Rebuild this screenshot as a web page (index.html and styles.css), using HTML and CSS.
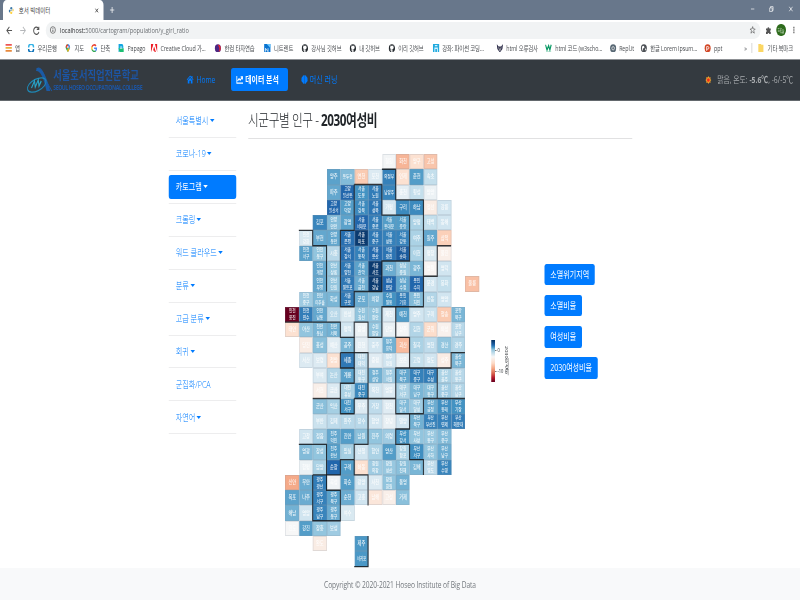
FILE: index.html
```html
<!DOCTYPE html>
<html lang="ko">
<head>
<meta charset="utf-8">
<title>호서 빅데이터</title>
<link rel="stylesheet" href="styles.css">
</head>
<body>
<div class="page">
  <div class="tabbar">
    <div class="tab">
      <svg class="ico" viewBox="0 0 10 10"><path d="M5 0C3 0 3 1 3 3h3v1H1C0 4 0 8 2 8h1V5h4V1Q7 0 5 0" fill="#3b78a8"/><path d="M5 10c2 0 2-1 2-3H4V6h5c1 0 1-4-1-4v3L3 6v3q0 1 2 1" fill="#ffd343"/></svg>
      <span class="tab-title">호서 빅데이터</span>
      <svg class="close" viewBox="0 0 8 8"><path d="M1 1l6 6M7 1l-6 6" stroke="#333" stroke-width="1.3"/></svg>
    </div>
    <svg class="plus" viewBox="0 0 8 8"><path d="M4 0v8M0 4h8" stroke="#fff" stroke-width="1.1"/></svg>
    <div class="win">
      <svg viewBox="0 0 8 8"><path d="M1 4h6" stroke="#fff"/></svg>
      <svg viewBox="0 0 8 8"><path d="M1 2.5h4.500v5H1zM2.500 2.500V.8H7V6H5.500" fill="none" stroke="#fff"/></svg>
      <svg viewBox="0 0 8 8"><path d="M1 1l6 6M7 1l-6 6" stroke="#fff"/></svg>
    </div>
  </div>
  <div class="toolbar">
    <svg viewBox="0 0 10 10"><path d="M9 5H1.500M5 1L1.300 5 5 9" fill="none" stroke="#555" stroke-width="1.300"/></svg>
    <svg viewBox="0 0 10 10"><path d="M1 5h7.500M5 1l3.700 4L5 9" fill="none" stroke="#b5b7ba" stroke-width="1.200"/></svg>
    <svg viewBox="0 0 10 10"><path d="M8.300 3A4 4 0 1 0 8.800 6.500M8.800 .8V3.800H5.600" fill="none" stroke="#555" stroke-width="1.400"/></svg>
    <div class="url">
      <svg viewBox="0 0 10 10"><circle cx="5" cy="5" r="4.200" fill="none" stroke="#555"/><path d="M5 4.500V7.500M5 2.300v1.200" stroke="#555" stroke-width="1.200"/></svg>
      <span><b>localhost:</b>5000/cartogram/population/y_girl_ratio</span>
      <svg class="star" viewBox="0 0 10 10"><path d="M5 .8l1.200 3H9.300L6.900 5.800l.9 3.200L5 7.200 2.200 9l.9-3.200L.7 3.800h3.100z" fill="none" stroke="#555" stroke-width=".9"/></svg>
    </div>
    <svg class="puzzle" viewBox="0 0 10 10"><path d="M1 3h2.500a1.500 1.500 0 1 1 3 0H9v2.300a1 1 0 0 0 0 2.200V10H6.500a1.300 1.300 0 0 0-2.600 0H1V7.500a1.200 1.200 0 0 0 0-2.400z" fill="#555"/></svg>
    <div class="avatar">하늘</div>
    <svg class="dots" viewBox="0 0 4 10"><path d="M1 1h2v2H1zM1 4h2v2H1zM1 7h2v2H1z" fill="#666"/></svg>
  </div>
  <div class="bookmarks">
    <div class="bm"><svg viewBox="0 0 10 10"><path d="M0 1h10" stroke="#e55" stroke-width="2"/><path d="M0 4.500h10" stroke="#e9b23c" stroke-width="2"/><path d="M0 8h10" stroke="#e8893c" stroke-width="2"/></svg>앱</div>
    <div class="bm"><svg viewBox="0 0 10 10"><path d="M1 4a4 4 0 0 1 8 0" fill="none" stroke="#36b3e6" stroke-width="2.400"/><path d="M1 6a4 4 0 0 0 8 0" fill="none" stroke="#0a70b8" stroke-width="2.400"/></svg>우리은행</div>
    <div class="bm"><svg viewBox="0 0 10 10"><path d="M5 10L2 5.500A3.700 3.700 0 0 1 5 0z" fill="#34a853"/><path d="M5 10l3-4.500A3.700 3.700 0 0 0 5 0z" fill="#4285f4"/><path d="M2 5A4 4 0 0 1 4 0l2 3z" fill="#ea4335"/><path d="M4 7l4-4-1 4-2 3z" fill="#fbbc04"/><circle cx="5" cy="3.500" r="1.200" fill="#fff"/></svg>지도</div>
    <div class="bm"><svg viewBox="0 0 10 10"><g fill="none" stroke-width="1.800"><path d="M8 2.200A4 4 0 0 0 1.500 3.500" stroke="#ea4335"/><path d="M1.500 3.300v3.400" stroke="#fbbc05"/><path d="M1.600 6.500A4 4 0 0 0 7.500 8" stroke="#34a853"/><path d="M7.300 8A4 4 0 0 0 8.800 5H5" stroke="#4285f4"/></g></svg>단축</div>
    <div class="bm"><svg viewBox="0 0 10 10"><path d="M1 0h6a3 4 0 0 1 0 7H5l-4 3z" fill="#13a7e0"/><path d="M1 5h8v5H3z" fill="#1dbf73"/><path d="M3 5h4M3.500 3.500h3" stroke="#fff"/></svg>Papago</div>
    <div class="bm"><svg viewBox="0 0 10 10"><path d="M0 0h10v10H0z" fill="#ed1c24"/><path d="M3.700 0h2.600L10 10H8L5 3 3.300 7.500H5L6 10H0z" fill="#fff"/><path d="M0 0h3.500L0 8z" fill="#ed1c24"/></svg>Creative Cloud 가...</div>
    <div class="bm"><svg viewBox="0 0 10 10"><circle cx="5" cy="5" r="4.800" fill="#4c2683"/><path d="M5 1a4 4 0 0 1 1 8Q9 6 5 1" fill="#e4262e"/></svg>한컴 타자연습</div>
    <div class="bm"><svg viewBox="0 0 10 10"><path d="M0 0h10v10H0z" fill="#0873d1"/><path d="M4 0h6v5z" fill="#6ac8ff"/><path d="M2 9V5l4 4V5" stroke="#fff" fill="none"/></svg>니트렌트</div>
    <div class="bm"><svg viewBox="0 0 10 10"><use href="#gh"/></svg>강사님 깃허브</div>
    <div class="bm"><svg viewBox="0 0 10 10"><use href="#gh"/></svg>내 깃허브</div>
    <div class="bm"><svg viewBox="0 0 10 10"><use href="#gh"/></svg>이리 깃허브</div>
    <div class="bm"><svg viewBox="0 0 10 10"><path d="M0 0h10v10H0z" fill="#20a9dd"/><path d="M3 10V5h4v5M3 2h4" stroke="#d3f2ff" stroke-width="1.500" fill="none"/></svg>강좌: 파이썬 코딩...</div>
    <div class="bm"><svg viewBox="0 0 10 10"><path d="M0 0l3 3h4l3-3-1 6-4 4-4-4z" fill="#33334f"/><path d="M3 4l2 4 2-4" stroke="#bbb" fill="none"/></svg>html 오류검사</div>
    <div class="bm"><svg viewBox="0 0 10 10"><path d="M0 1l2.500 6L5 2l2 5 2-6" fill="none" stroke="#059862" stroke-width="1.800"/><path d="M1 9.300h8" stroke="#6bc5a0"/></svg>html 코드 (w3scho...</div>
    <div class="bm"><svg viewBox="0 0 10 10"><circle cx="5" cy="5" r="4.800" fill="#586874"/><circle cx="5" cy="5" r="2" fill="none" stroke="#eee"/></svg>Repl.it</div>
    <div class="bm"><svg viewBox="0 0 10 10"><circle cx="5" cy="5" r="4.700" fill="#4d5156"/><path d="M2 3l3-1 1 2-3 2 1 2-2-1zM7 5l2 1-2 2z" fill="#fff"/></svg>한글 Lorem Ipsum...</div>
    <div class="bm"><svg viewBox="0 0 10 10"><circle cx="5" cy="5" r="4.800" fill="#d24726"/><path d="M3.500 8V3h2a1.500 1.500 0 0 1 0 3h-2" fill="none" stroke="#fff" stroke-width="1.100"/></svg>ppt</div>
    <div class="bm more">»</div>
    <div class="bm"><svg viewBox="0 0 10 10"><path d="M1 0h4l1 1h3v9H1z" fill="#fbd663"/></svg>기타 북마크</div>
  </div>
  <svg class="defs"><defs><path id="gh" d="M5 .2a4.800 4.800 0 0 0-2 9.200h1V7.700C2 8 2.200 6.500 1.500 6.200c1.200-.2 1 .9 2.500.6l.3-.6C1.500 5.800 2 3.600 2.700 3V1.600L4 2.200h2l1.300-.6V3c.7.600 1.200 2.800-1.600 3.200L6 7v2.400h1A4.800 4.800 0 0 0 5 .2" fill="#24292e"/></defs></svg>

  <nav class="navbar">
    <div class="logo">
      <svg viewBox="0 0 36 28"><path d="M14 3Q20-1 26 14L34 25" fill="none" stroke="#1b5aa5" stroke-width="1.200"/><path d="M13 5Q21 4 27 25L32 25Q24 1 14 2z" fill="#1b5aa5"/><ellipse cx="14" cy="19" rx="13" ry="6" transform="rotate(-20 14 19)" fill="none" stroke="#1f88b5" stroke-width="1.300"/><path d="M7 22l4-7 1 6 4-7 1 6 3-5" fill="none" stroke="#29a3c7" stroke-width="1.500"/></svg>
      <div><div class="logo-ko">서울호서직업전문학교</div><div class="logo-en">SEOUL HOSEO OCCUPATIONAL COLLEGE</div></div>
    </div>
    <a class="home"><svg viewBox="0 0 10 10"><path d="M5 .5L0 5l.8.8L5 2l4.200 3.800L10 5 8.500 3.600V1H7v1.300zM1.500 6L5 3l3.500 3v3.500H6v-3H4v3H1.500z" fill="#007bff"/></svg>Home</a>
    <a class="current"><svg viewBox="0 0 10 10"><path d="M.7 1v8H10M2 6.500l2.200-2.300 1.600 1.500L8.500 3M6.500 2h3v3" fill="none" stroke="#fff" stroke-width="1.500"/></svg>데이터 분석</a>
    <a class="ml"><svg viewBox="0 0 10 10"><path d="M4.800.3Q2 0 2 2 0 3 .6 5-.2 7 2 8q1 2.500 2.800 1.500zM5.200.3Q8 0 8 2q2 1 1.400 3Q10.200 7 8 8 7 10.500 5.200 9.500z" fill="#007bff"/></svg>머신 러닝</a>
    <div class="weather"><svg viewBox="0 0 10 10"><path d="M5 0l1.300 2 2.400-.5L8.300 4 10 5 8.300 6.300l.4 2.200L6.300 8 5 10 3.700 8l-2.400.5.4-2.200L0 5l1.700-1-.4-2.500L3.700 2z" fill="#f1a32c"/><circle cx="5" cy="5" r="2.300" fill="#f22c18"/></svg><span>맑음, 온도: <b>-5.6℃</b>, -6/-5℃</span></div>
  </nav>

  <main class="main">
    <aside class="side">
      <a><span>서울특별시</span></a>
      <a><span>코로나-19</span></a>
      <a class="active"><span>카토그램</span></a>
      <a><span>크롤링</span></a>
      <a><span>워드 클라우드</span></a>
      <a><span>분류</span></a>
      <a><span>고급 분류</span></a>
      <a><span>회귀</span></a>
      <a class="plain"><span>군집화/PCA</span></a>
      <a><span>자연어</span></a>
    </aside>
    <section class="content">
      <h3>시군구별 인구 - <b>2030여성비</b></h3>
      <div class="row">
        <div class="map" id="map"></div>
        <div class="legend">
          <div class="bar"></div>
          <div class="ticks"><span>0</span><span>-10</span></div>
          <div class="label">2030여성비</div>
        </div>
        <div class="buttons">
          <a>소멸위기지역</a><a>소멸비율</a><a>여성비율</a><a>2030여성비율</a>
        </div>
      </div>
    </section>
  </main>
  <footer>Copyright © 2020-2021 Hoseo Institute of Big Data</footer>
</div>
<script src="map.js"></script>
</body>
</html>
```
FILE: styles.css
```css
* { box-sizing: border-box; }
html { overflow: hidden; }
body { margin: 0; width: 800px; height: 600px; overflow: hidden; background: #fff; }
.page {
  width: 1066.6px; height: 600px; overflow: hidden;
  transform: scaleX(.75); transform-origin: 0 0;
  font-family: "Open Sans", "Noto Sans CJK KR", sans-serif;
  font-size: 8.9px; line-height: 13px; color: #212529;
  display: flex; flex-direction: column; white-space: nowrap;
}
svg { display: block; flex: none; }
.defs { width: 0; height: 0; position: absolute; }

.tabbar { height: 20px; background: #68778b; display: flex; align-items: center; padding-left: 4px; }
.tab { width: 134px; height: 20px; background: #fff; border-radius: 5px 5px 0 0; padding: 0 6px 0 7px; display: flex; align-items: center; font-size: 7.3px; color: #444; }
.ico { width: 8px; height: 7px; margin-right: 6px; }
.close { width: 6px; height: 5px; margin-left: auto; }
.plus { width: 7px; height: 6px; margin-left: 8px; }
.win { margin: 0 9px 3px auto; display: flex; gap: 18.500px; }
.win svg { width: 7px; height: 6px; }

.toolbar { height: 20px; display: flex; align-items: center; padding-left: 8px; }
.toolbar > svg { width: 9px; height: 9px; margin-right: 9px; }
.url { flex: 1; height: 17px; border-radius: 9px; background: #f1f3f4; display: flex; align-items: center; padding: 0 6px 0 5px; font-size: 7.550px; color: #6b6f73; margin-right: 6.500px; margin-left: -1px; }
.url svg { width: 9px; height: 8px; margin-right: 5px; }
.url b { font-weight: 400; color: #303134; }
.url .star { margin: 0 0 0 auto; }
.toolbar > .puzzle { margin-right: 6px; width: 9px; height: 8px; }
.avatar { width: 12.500px; height: 12.500px; border-radius: 50%; background: #2e6b1c; color: #d9e8d5; font-size: 5px; line-height: 12px; text-align: center; margin-right: 5px; }
.toolbar > .dots { width: 5px; height: 8px; margin: 0 6px 0 3px; }

.bookmarks { height: 20px; border-bottom: 1px solid #8d9094; display: grid; padding: 0 0 3px 7px; align-items: center; font-size: 7.1px; color: #4b4e52;
  grid-template-columns: 30px 49.3px 34.7px 36px 44px 85.3px 66px 49.7px 64px 52px 58.7px 85.3px 65.3px 85.3px 41.3px 85.3px 53.3px 18px 50px; }
.bm { display: flex; align-items: center; letter-spacing: -.1px; }
.bm svg { width: 9px; height: 8.5px; margin-right: 4px; }
.more { border-right: 1px solid #ccc; width: 11px; height: 10px; }

.navbar { height: 40.5px; background: #343a40; border-bottom: 1px solid #63686d; display: flex; align-items: center; color: #007bff; }
.navbar a { display: flex; align-items: center; height: 23px; }
.navbar a svg { width: 9px; height: 9px; margin-right: 3px; }
.logo { margin-left: 35px; width: 213px; display: flex; align-items: center; color: #1d55a3; }
.logo > svg { width: 36px; height: 28px; }
.logo-ko { font-size: 12.400px; font-weight: 700; line-height: 15px; }
.logo-en { font-size: 6.900px; line-height: 9px; letter-spacing: -.56px; font-weight: 700; }
.home { width: 60px; }
.home svg { width: 11px !important; }
.current { background: #007bff; color: #fff; font-weight: 700; border-radius: 3px; width: 76px; padding-left: 7px; font-size: 9.200px; }
.ml { margin-left: 17px; font-size: 9.400px; }
.ml svg { width: 10px !important; margin-right: 2px !important; }
.weather { margin-left: auto; margin-right: 9px; display: flex; align-items: center; color: #a9acaf; font-size: 9.100px; }
.weather svg { width: 9px; height: 8px; margin-right: 7px; }

.main { height: 467.5px; display: flex; padding-left: 224.700px; }
.side { width: 90px; margin-right: 16px; padding-top: 4.800px; font-size: 9.500px; }
.side a { height: 32.9px; display: flex; align-items: center; color: #007bff; border-bottom: 1px solid #ededee; }
.side span { flex: 1; height: 23.500px; line-height: 23px; border-radius: 3px; padding-left: 9.500px; font-weight: 300; }
.side span::after { content: ""; display: inline-block; margin-left: 2px; vertical-align: 2px; border: 3.300px solid transparent; border-top-color: #007bff; border-bottom: 0; }
.side .plain span::after { display: none; }
.side .active span { background: #007bff; color: #fff; font-weight: 400; }
.side .active span::after { border-top-color: #fff; }
.content { width: 512px; }
h3 { margin: 0; height: 38px; border-bottom: 1px solid #e1e1e2; font-size: 15.600px; line-height: 39px; font-weight: 300; letter-spacing: -.58px; }
h3 b { font-weight: 700; }
.row { display: flex; padding: 15.500px 0 0 49.700px; }
.map { width: 258.400px; height: 412.600px; position: relative; display: grid; grid-template-columns: repeat(14, 1fr); grid-template-rows: repeat(27, 1fr); flex: none; }
.cell { border: .5px solid rgba(135,150,165,.22); color: rgba(255,255,255,.85); font-size: 5.600px; line-height: 7px; display: flex; align-items: center; justify-content: center; text-align: center; overflow: hidden; font-weight: 500; min-width: 0; min-height: 0; letter-spacing: -.1px; }
.cell.two { font-size: 4.900px; }
.cell.long { font-size: 4.700px; }
.edges { position: absolute; inset: 0; width: 100%; height: 100%; overflow: visible; }
.edges path { fill: none; stroke: #15181b; stroke-opacity: .85; stroke-width: 1.400px; vector-effect: non-scaling-stroke; }
.legend { margin: 186px 0 0 16px; display: flex; height: 41.500px; font-size: 5.400px; line-height: 6px; }
.bar { width: 5px; background: linear-gradient(#053061, #2166ac 12%, #4393c3 17%, #92c5de 23%, #f7f7f7 40%, #fddbc7 55%, #f4a582 68%, #d6604d 80%, #b2182b 90%, #67001f); }
.ticks { width: 12px; padding: 7px 0 0 0; display: flex; flex-direction: column; gap: 15px; }
.ticks span { display: flex; align-items: center; line-height: 6px; }
.ticks span::before { content: ""; width: 2px; height: 1px; background: #777; margin-right: 1.500px; }
.label { writing-mode: vertical-rl; font-size: 5.500px; line-height: 8px; padding-top: 6px; }
.buttons { margin: 109.500px 0 0 46.500px; display: flex; flex-direction: column; align-items: flex-start; gap: 9.400px; font-size: 9.400px; }
.buttons a { height: 21.800px; line-height: 21.500px; padding: 0 7.500px; border-radius: 2.500px; background: #007bff; color: #fff; }
.buttons a:last-child { letter-spacing: -.08px; }
footer { height: 32px; background: #f8f9fa; color: #73787d; text-align: center; line-height: 33px; letter-spacing: -.12px; }
```
FILE: map.js
```js
// Each row: [first column, "name value", ...]; "-" leaves a tile empty, "/" breaks a name over two lines.
const rows = [
  [7, "철원 51,화천 33,양구 42,고성 36"],
  [3, "양주 77,동두천 72,연천 37,포천 57,의정부 84,인제 42,춘천 78,속초 62"],
  [3, "파주 76,고양/일산동 90,서울/도봉 80,서울/노원 85,남양주 83,홍천 55,횡성 62,양양 53"],
  [3, "고양/일산서 90,고양/덕양 78,서울/강북 82,서울/성북 87,가평 59,구리 82,하남 82,정선 46,강릉 60"],
  [2, "김포 83,안양/만안 72,광명 77,서울/서대문 90,서울/종로 85,서울/동대문 78,서울/중랑 78,양평 66,태백 62,동해 60"],
  [1, "인천/강화 58,부천 76,안양/동안 76,서울/은평 88,서울/마포 98,서울/중구 86,서울/성동 84,서울/강동 84,여주 66,원주 76,삼척 38"],
  [1, "인천/서구 77,인천/동구 70,시흥 64,서울/강서 88,서울/동작 84,서울/용산 89,서울/광진 87,서울/송파 92,이천 66,평창 58,울진 47"],
  [2, "인천/계양 76,안산/상록 70,서울/양천 86,서울/관악 77,서울/서초 98,과천 75,성남/중원 70,광주 73,영월 49,영덕 60"],
  [2, "인천/부평 76,안산/단원 70,서울/영등포 86,서울/금천 75,서울/강남 98,성남/분당 90,성남/수정 76,용인/수지 90,문경 60,봉화 62,-,울릉 35"],
  [1, "인천/중구 68,인천/미추홀 73,화성 73,서울/구로 86,군포 75,의왕 72,수원/영통 80,용인/기흥 85,용인/처인 72,안동 65,영양 60"],
  [0, "인천/옹진 0,인천/연수 85,인천/남동 76,오산 64,안성 58,수원/권선 70,수원/장안 70,제천 57,예천 78,영주 60,구미 61,청송 37,포항/북구 73"],
  [0, "태안 42,아산 70,천안/동남 73,천안/서북 74,평택 60,음성 53,수원/팔달 70,단양 54,상주 51,김천 65,군위 41,의성 48,포항/남구 64"],
  [1, "당진 46,홍성 71,예산 56,공주 73,진천 55,충주 60,청주/흥덕 74,괴산 34,칠곡 66,영천 63,경산 70,경주 65"],
  [1, "서산 57,보령 57,청양 42,세종 86,대전/대덕 63,증평 56,청주/청원 60,보은 54,고령 62,청도 60,성주 46,울산/북구 73"],
  [2, "부여 57,논산 65,계룡 77,대전/동구 64,청주/상당 74,청주/서원 68,대구/북구 76,대구/중구 84,대구/수성 85,울산/울주 66,울산/동구 64"],
  [2, "서천 47,금산 57,대전/유성 66,대전/중구 82,옥천 60,영동 57,대구/서구 66,대구/남구 73,대구/동구 71,울산/중구 68,울산/남구 65"],
  [2, "군산 71,익산 67,대전/서구 80,무주 57,거창 63,합천 56,대구/달서 72,대구/달성 68,부산/금정 75,부산/동래 81,부산/기장 80"],
  [2, "부안 61,김제 63,완주 64,장수 64,함양 60,창녕 54,밀양 60,부산/북구 74,부산/부산진 84,부산/연제 84,부산/해운대 85"],
  [1, "고창 60,정읍 68,전주/덕진 76,진안 78,남원 71,진주 70,의령 68,부산/강서 80,부산/사상 70,부산/동구 69,부산/중구 72"],
  [1, "영광 72,장성 70,전주/완산 78,임실 67,산청 60,함안 66,양산 78,창원/합포 66,부산/서구 81,부산/사하 70,부산/남구 75"],
  [1, "함평 53,담양 66,순창 90,구례 78,하동 42,창원/의창 68,창원/성산 69,창원/진해 71,김해 73,부산/영도 63,부산/수영 83"],
  [0, "신안 31,무안 75,광주/광산 85,곡성 52,화순 78,광양 60,사천 57,창원/회원 70,통영 74"],
  [0, "목포 77,나주 75,광주/서구 84,광주/북구 77,순천 75,고흥 60,남해 44,고성 47,거제 71"],
  [0, "해남 74,영암 60,광주/남구 83,광주/동구 75,여수 58"],
  [0, "진도 50,강진 78,장흥 70,보성 68"],
  [2, "완도 46,-,-,제주 79"],
  [5, "서귀포 79"]
];

const scale = ["67001f", "b2182b", "d6604d", "f4a582", "fddbc7", "f7f7f7", "d1e5f0", "92c5de", "4393c3", "2166ac", "053061"]
  .map(h => [0, 2, 4].map(i => parseInt(h.slice(i, i + 2), 16)));

function color(v) {
  const i = Math.min(9, Math.floor(v / 10));
  const t = v / 10 - i;
  return "rgb(" + scale[i].map((c, k) => Math.round(c + (scale[i + 1][k] - c) * t)).join(",") + ")";
}

const map = document.getElementById("map");
rows.forEach(([start, list], r) => {
  list.split(",").forEach((item, k) => {
    if (item === "-") return;
    const [name, value] = item.split(" ");
    const cell = document.createElement("div");
    cell.className = "cell" + (name.includes("/") ? " two" : "") + (name.split("/").pop().length > 2 ? " long" : "");
    cell.style.gridArea = (r + 1) + " / " + (start + k + 1);
    cell.style.backgroundColor = color(+value);
    const label = document.createElement("span");
    label.innerHTML = name.replace("/", "<br>");
    cell.append(label);
    map.append(cell);
  });
});

// Province boundaries in tile coordinates.
const edges = [
  "5,2 7,2 7,4 9,4 9,7 7,7 7,9 5,9 5,10 4,10 4,5 5,5 5,2",
  "7,1 8,1 8,3 10,3 10,10 7,10 7,12 6,12 6,11 5,11 5,12 4,12 4,11 0,11",
  "1,5 2,5 2,6 3,6 3,9",
  "10,8 11,8 11,6 12,6",
  "8,10 8,12 9,12 9,14",
  "5,12 5,13", "4,13 6,13 6,19 5,19 5,20 4,20 4,21 3,21 3,19 1,19",
  "4,13 4,14 5,14 5,13", "5,14 5,15 4,15 4,17 5,17 5,16",
  "2,16 4,16", "5,16 8,16",
  "13,13 12,13 12,14 8,14 8,17 10,17 10,16 13,16", "11,14 11,16",
  "9,17 9,18 8,18 8,19 9,19 9,20 10,20 10,21",
  "2,21 3,21 3,22 4,22 4,24 2,24 2,21",
  "5,20 5,21 6,21 6,23", "6,25 6,27 5,27"
];
map.insertAdjacentHTML("beforeend",
  '<svg class="edges" viewBox="0 0 14 27" preserveAspectRatio="none">' +
  edges.map(e => '<path d="M' + e.replace(/ /g, "L") + '"/>').join("") + "</svg>");
```
